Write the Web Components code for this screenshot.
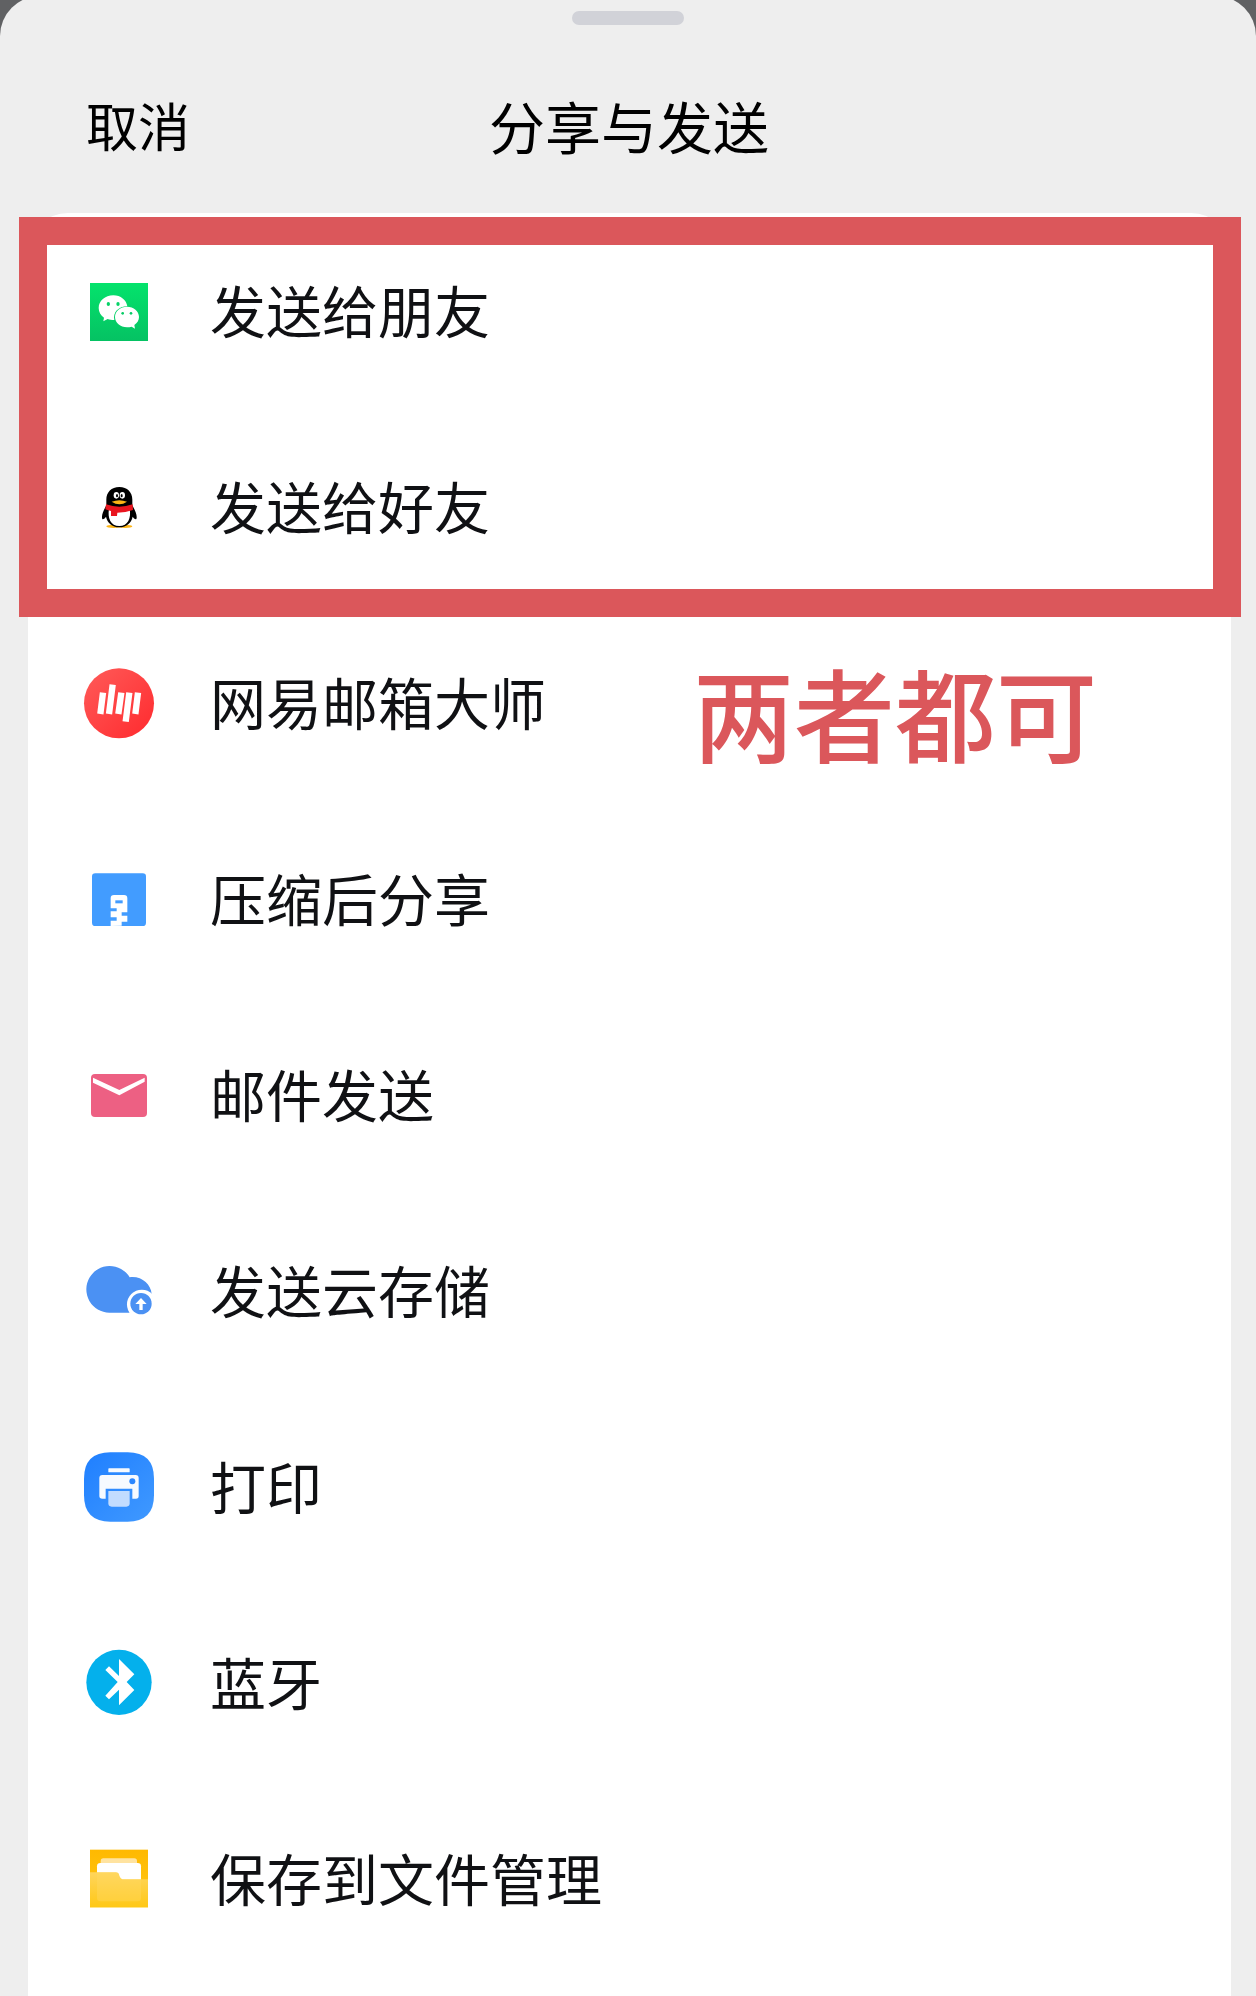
<!DOCTYPE html>
<html lang="zh-CN">
<head>
<meta charset="utf-8">
<meta name="viewport" content="width=device-width, initial-scale=1">
<title>分享与发送</title>
<style>
    body {
        margin: 0;
        background: #606163;
        color: #101114;
        font-family: "Noto Sans CJK SC", sans-serif;
    }
</style>
</head>
<body>
<share-sheet heading="分享与发送">
    <marked-group>
        <share-item icon="wechat">发送给朋友</share-item>
        <share-item icon="qq">发送给好友</share-item>
    </marked-group>
    <share-item icon="mail163">网易邮箱大师<span slot="note">两者都可</span></share-item>
    <share-item icon="zip">压缩后分享</share-item>
    <share-item icon="mail">邮件发送</share-item>
    <share-item icon="cloud">发送云存储</share-item>
    <share-item icon="print">打印</share-item>
    <share-item icon="bluetooth">蓝牙</share-item>
    <share-item icon="folder">保存到文件管理</share-item>
</share-sheet>

<script>
(function () {
    // all icons share a 300x300 canvas
    const icons = {
        wechat: `
            <defs><linearGradient id="g" x2="0" y2="1"><stop stop-color="#04e36c"/><stop offset="1" stop-color="#05c263"/></linearGradient></defs>
            <rect x="60" y="66" width="174" height="174" fill="url(#g)"/>
            <path fill="#fff" d="M130 103c-25 0-44 17-44 38 0 12 6 22 16 29l-2 11 13-7c6 2 12 3 20 3-5-22 12-41 39-41-3-19-20-33-42-33z"/>
            <ellipse cx="115" cy="129" rx="5" ry="6" fill="#05d267"/>
            <ellipse cx="144" cy="129" rx="5" ry="6" fill="#05d267"/>
            <path fill="#fff" d="M171 137c-20 0-36 14-36 31s16 31 36 31c5 0 10-1 14-2l10 6-2-11c9-6 14-14 14-24 0-17-16-31-36-31z"/>
            <circle cx="158" cy="157" r="4" fill="#05cc65"/>
            <circle cx="183" cy="157" r="4" fill="#05cc65"/>`,
        qq: `
            <ellipse cx="131" cy="208" rx="22" ry="5" fill="#fcb416"/>
            <ellipse cx="165" cy="208" rx="22" ry="5" fill="#fcb416"/>
            <path d="M148 90c-24 0-39 16-39 38v17c-5 9-14 25-13 37 0 5 4 8 12-3 4 18 18 32 40 32s36-14 40-32c8 11 12 8 12 3 1-12-8-28-13-37v-17c0-22-15-38-39-38z"/>
            <path fill="#fff" d="M117 155q31 8 62 0c5 28-5 52-31 52s-36-24-31-52z"/>
            <path fill="#e9151f" d="M108 142q40 14 80 0l1 17q-22 8-47 8l-1 10h-18v-15q-8-1-17-5z"/>
            <ellipse cx="139" cy="115" rx="8" ry="10" fill="#fff"/>
            <ellipse cx="157" cy="115" rx="8" ry="10" fill="#fff"/>
            <ellipse cx="141" cy="116" rx="3" ry="5"/>
            <ellipse cx="155" cy="116" rx="3" ry="5"/>
            <path fill="#fcb416" d="M125 134q23-9 46 0-23 15-46 0z"/>`,
        mail163: `
            <defs><linearGradient id="g" x2="1" y2="1"><stop stop-color="#ff5b59"/><stop offset="1" stop-color="#ff2a2e"/></linearGradient></defs>
            <circle cx="147" cy="151" r="105" fill="url(#g)"/>
            <path stroke="#fff" stroke-width="19" d="M99 119l-8 64M128 95l-11 88M154 119l-9 64M178 119l-11 87M204 119l-8 64"/>`,
        zip: `
            <rect x="66" y="73" width="162" height="158" rx="10" fill="#429cff"/>
            <path fill="#fff" d="M122 231v-16h18v-10h-18v-18h18v-9h-18v-30q0-10 10-10h30q10 0 10 10v42h-17v10h17v18h-17v12z"/>
            <rect x="136" y="154" width="22" height="9" fill="#429cff"/>`,
        mail: `
            <rect x="63" y="87" width="168" height="129" rx="12" fill="#ed6083"/>
            <path fill="#fff" d="M69 98l79 37 76-37v12l-76 41-79-38z"/>`,
        cloud: `
            <path fill="#4b91f3" d="M118 215a70 70 0 1 1 61-106c34-5 64 20 66 50v56z"/>
            <path fill="#fff" d="M184 222a39 39 0 1 1 63-63v63z"/>
            <circle cx="213" cy="188" r="32" fill="#4b91f3"/>
            <path fill="#fff" d="M213 171l17 18h-12v18h-10v-18h-12z"/>`,
        print: `
            <defs><linearGradient id="g" x2="1" y2="1"><stop stop-color="#1f7fff"/><stop offset="1" stop-color="#4099ff"/></linearGradient></defs>
            <path fill="url(#g)" d="M42 125q0-79 79-79h52q79 0 79 79v50q0 79-79 79h-52q-79 0-79-79z"/>
            <rect x="115" y="94" width="64" height="12" rx="2" fill="#f6faff"/>
            <path fill="#f6faff" d="M97 114h100q9 0 9 9v54q0 8-8 8h-11v-30h-80v30H97q-9 0-9-8v-54q0-9 9-9z"/>
            <circle cx="187" cy="133" r="9" fill="#2b87ff"/>
            <path fill="#c2dcff" d="M115 162h64v37q0 10-10 10h-44q-10 0-10-10z"/>`,
        bluetooth: `
            <circle cx="147" cy="148" r="98" fill="#04b0ec"/>
            <path fill="#fff" d="M147 78l46 46-23 23 23 24-46 46v-47l-30 29-11-11 37-41-37-36 11-11 30 29z"/>`,
        folder: `
            <defs>
                <linearGradient id="g" x2="0" y2="1"><stop stop-color="#ffb900"/><stop offset="1" stop-color="#ffc81a"/></linearGradient>
                <linearGradient id="f" x2="0" y2="1"><stop stop-color="#ffd55c"/><stop offset="1" stop-color="#ffc816"/></linearGradient>
            </defs>
            <rect x="60" y="62" width="174" height="173" fill="url(#g)"/>
            <rect x="92" y="88" width="109" height="30" rx="8" fill="#ffe3a0"/>
            <rect x="81" y="102" width="132" height="90" rx="10" fill="#fff"/>
            <path fill="url(#f)" d="M60 130h77q9 0 11 10 3 11 14 11h72v84H60z"/>
            <path fill="#ffd963" opacity=".4" d="M81 130h56q9 0 11 10 3 11 14 11h51v56q0 10-10 10H91q-10 0-10-10z"/>`
    };

    const sheetTemplate = document.createElement("template");
    sheetTemplate.innerHTML = `
    <style>
    :host {
        display: flex;
        flex-direction: column;
        box-sizing: border-box;
        min-height: calc(100vh + 4px);
        margin-top: -4px;
        padding-top: 15px;
        border-radius: 40px 40px 0 0;
        background: #eee;
    }
    .handle {
        width: 112px;
        height: 14px;
        margin: 0 auto;
        border-radius: 7px;
        background: #d1d2d8;
    }
    header {
        display: grid;
        grid-template-columns: 1fr auto 1fr;
        align-items: center;
        height: 188px;
        padding: 12px 84px 0 86px;
        box-sizing: border-box;
        color: #000;
    }
    button {
        justify-self: start;
        padding: 0;
        border: 0;
        background: none;
        color: inherit;
        font: inherit;
        font-size: 52px;
        line-height: 64px;
    }
    h1 {
        margin: 0;
        font-size: 56px;
        font-weight: 400;
        line-height: 64px;
    }
    main {
        flex: 1;
        margin: 0 25px 0 28px;
        border-radius: 40px 40px 0 0;
        background: #fff;
    }
    </style>
    <div class="handle"></div>
    <header>
        <button type="button">取消</button>
        <h1></h1>
    </header>
    <main><slot></slot></main>
    `;

    class ShareSheet extends HTMLElement {
        constructor() {
            super();
            this.attachShadow({ mode: "open" });
            this.shadowRoot.appendChild(sheetTemplate.content.cloneNode(true));
        }
        connectedCallback() {
            this.shadowRoot.querySelector("h1").textContent = this.getAttribute("heading");
        }
    }

    const groupTemplate = document.createElement("template");
    groupTemplate.innerHTML = `
    <style>
    :host {
        display: block;
        position: relative;
    }
    /* red frame drawn over the rows, a little wider than the card */
    .frame {
        position: absolute;
        inset: 4px -10px -12px -9px;
        border: 28px solid #db575b;
        pointer-events: none;
    }
    </style>
    <slot></slot>
    <div class="frame"></div>
    `;

    class MarkedGroup extends HTMLElement {
        constructor() {
            super();
            this.attachShadow({ mode: "open" });
            this.shadowRoot.appendChild(groupTemplate.content.cloneNode(true));
        }
    }

    const itemTemplate = document.createElement("template");
    itemTemplate.innerHTML = `
    <style>
    :host {
        display: block;
        position: relative;
    }
    button {
        display: flex;
        align-items: center;
        gap: 40px;
        width: 100%;
        height: 196px;
        padding: 0 42px;
        border: 0;
        background: none;
        color: inherit;
        font: inherit;
        font-size: 56px;
        line-height: 64px;
        text-align: left;
    }
    svg {
        flex: none;
        width: 100px;
        height: 100px;
    }
    .label {
        padding-bottom: 4px;
    }
    ::slotted([slot="note"]) {
        position: absolute;
        top: 42px;
        left: 665px;
        color: #db575b;
        font-size: 101px;
        font-weight: 500;
        line-height: 128px;
        white-space: nowrap;
    }
    </style>
    <button type="button">
        <svg viewBox="0 0 300 300" aria-hidden="true"></svg>
        <span class="label"><slot></slot></span>
    </button>
    <slot name="note"></slot>
    `;

    class ShareItem extends HTMLElement {
        constructor() {
            super();
            this.attachShadow({ mode: "open" });
            this.shadowRoot.appendChild(itemTemplate.content.cloneNode(true));
        }
        connectedCallback() {
            const svg = this.shadowRoot.querySelector("svg");
            svg.innerHTML = icons[this.getAttribute("icon")] || "";
        }
    }

    customElements.define("share-sheet", ShareSheet);
    customElements.define("marked-group", MarkedGroup);
    customElements.define("share-item", ShareItem);
})();
</script>
</body>
</html>
